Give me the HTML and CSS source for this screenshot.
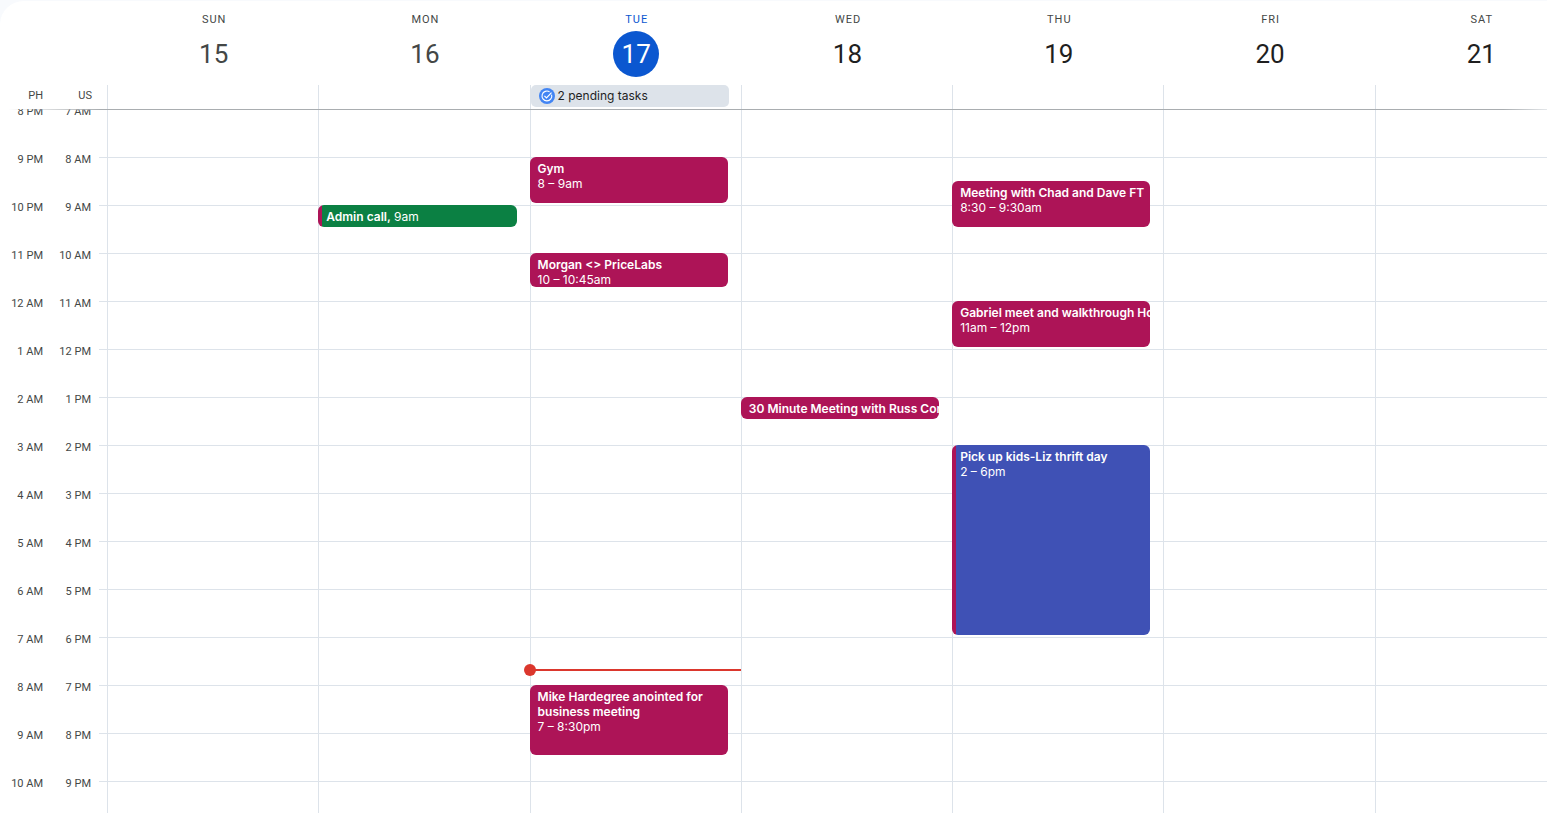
FILE: index.html
```html
<!DOCTYPE html>
<html lang="en">
<head>
<meta charset="utf-8">
<title>Calendar week</title>
<link rel="stylesheet" href="styles.css">
</head>
<body>
<main class="panel">
  <header class="head">
    <div class="week dates">
      <div></div>
      <div class="date past"><span class="dow">SUN</span><button class="num">15</button></div>
      <div class="date past"><span class="dow">MON</span><button class="num">16</button></div>
      <div class="date today"><span class="dow">TUE</span><button class="num">17</button></div>
      <div class="date"><span class="dow">WED</span><button class="num">18</button></div>
      <div class="date"><span class="dow">THU</span><button class="num">19</button></div>
      <div class="date"><span class="dow">FRI</span><button class="num">20</button></div>
      <div class="date"><span class="dow">SAT</span><button class="num">21</button></div>
    </div>
    <div class="week allday">
      <div class="zones"><span>PH</span><span>US</span></div>
      <div class="slot"></div>
      <div class="slot"></div>
      <div class="slot">
        <button class="tasks">
          <svg class="tasks-icon" viewBox="0 0 16 16" width="16" height="16" aria-hidden="true">
            <circle cx="8" cy="8" r="8" fill="#4285f4"/>
            <path d="M12.6 6.6A4.9 4.9 0 1 1 10.6 3.9" fill="none" stroke="#fff" stroke-width="1.1"/>
            <path d="M5.4 7.8l2.1 2.1 5-5.2" fill="none" stroke="#fff" stroke-width="1.2"/>
          </svg>
          <span>2 pending tasks</span>
        </button>
      </div>
      <div class="slot"></div>
      <div class="slot"></div>
      <div class="slot"></div>
      <div class="slot"></div>
    </div>
  </header>
  <div class="scroll">
    <div class="week hours">
      <div class="gutter">
        <div class="times">
          <span>8 PM</span><span>7 AM</span>
          <span>9 PM</span><span>8 AM</span>
          <span>10 PM</span><span>9 AM</span>
          <span>11 PM</span><span>10 AM</span>
          <span>12 AM</span><span>11 AM</span>
          <span>1 AM</span><span>12 PM</span>
          <span>2 AM</span><span>1 PM</span>
          <span>3 AM</span><span>2 PM</span>
          <span>4 AM</span><span>3 PM</span>
          <span>5 AM</span><span>4 PM</span>
          <span>6 AM</span><span>5 PM</span>
          <span>7 AM</span><span>6 PM</span>
          <span>8 AM</span><span>7 PM</span>
          <span>9 AM</span><span>8 PM</span>
          <span>10 AM</span><span>9 PM</span>
        </div>
        <div class="ticks"></div>
      </div>
      <section class="day"></section>
      <section class="day">
        <button class="event green" style="grid-row: 9 / span 2"><span class="line"><b>Admin call,</b> 9am</span></button>
      </section>
      <section class="day">
        <button class="event" style="grid-row: 5 / span 4"><b class="line">Gym</b><span>8 – 9am</span></button>
        <button class="event" style="grid-row: 13 / span 3"><b class="line">Morgan &lt;&gt; PriceLabs</b><span>10 – 10:45am</span></button>
        <button class="event" style="grid-row: 49 / span 6"><b>Mike Hardegree anointed for business meeting</b><span>7 – 8:30pm</span></button>
        <div class="now"></div>
      </section>
      <section class="day">
        <button class="event" style="grid-row: 25 / span 2"><b class="line">30 Minute Meeting with Russ Corn</b></button>
      </section>
      <section class="day">
        <button class="event" style="grid-row: 7 / span 4"><b class="line">Meeting with Chad and Dave FT</b><span>8:30 – 9:30am</span></button>
        <button class="event" style="grid-row: 17 / span 4"><b class="line">Gabriel meet and walkthrough Ho</b><span>11am – 12pm</span></button>
        <button class="event blue" style="grid-row: 29 / span 16"><b class="line">Pick up kids-Liz thrift day</b><span>2 – 6pm</span></button>
      </section>
      <section class="day"></section>
      <section class="day"></section>
    </div>
  </div>
</main>
</body>
</html>
```
FILE: styles.css
```css
* { box-sizing: border-box; }

body {
  margin: 0;
  background: #f8fafd;
  color: #444746;
  font-family: Roboto, "Liberation Sans", sans-serif;
  font-size: 11px;
}

button {
  margin: 0;
  padding: 0;
  border: 0;
  background: none;
  color: inherit;
  font: inherit;
  cursor: pointer;
}

.panel {
  display: flex;
  flex-direction: column;
  height: 100vh;
  padding-top: 1px;
  overflow: hidden;
  background: #fff;
  border-top: 1px solid #f8fafd;
  border-top-left-radius: 24px;
}

/* The last day runs past the right edge, under the scroll bar. */
.week {
  display: grid;
  grid-template-columns: 107px repeat(7, minmax(0, 1fr));
  margin-right: -39px;
}

.head {
  position: relative;
  z-index: 1;
}

.head::after {
  content: "";
  position: absolute;
  top: 100%;
  left: 0;
  width: 100%;
  height: 1px;
  background: linear-gradient(to right, transparent 8px, #a9adb0 100px, #a9adb0 calc(100% - 44px), #e4e7ea);
}

.dates { padding: 10px 0 8px; }

.date {
  display: flex;
  flex-direction: column;
  align-items: center;
  gap: 3px;
  padding-left: 2px;
}

.dow {
  padding-left: 1px;
  line-height: 16px;
  letter-spacing: 1px;
}

.num {
  width: 46px;
  height: 46px;
  border-radius: 50%;
  color: #1f1f1f;
  font-size: 26px;
}

.past .num { color: #444746; }
.today .dow { color: #0b57d0; }
.today .num { background: #0b57d0; color: #fff; }

.allday { height: 24px; }

.zones {
  display: grid;
  grid-template-columns: 43px 49px;
  line-height: 21px;
  text-align: right;
}

.slot { border-left: 1px solid #dde3ea; }

.tasks {
  display: flex;
  align-items: center;
  gap: 3px;
  width: calc(100% - 12px);
  height: 22px;
  padding-left: 8px;
  border-radius: 5px;
  background: #dde3ea;
  color: #1f1f1f;
  font-family: Inter, sans-serif;
  font-size: 12px;
  line-height: 20px;
}

.tasks span { padding-bottom: 1px; }

.scroll {
  flex: 1;
  min-height: 0;
  overflow: hidden;
}

.gutter {
  display: grid;
  grid-template-columns: 99px 8px;
}

.times {
  display: grid;
  grid-template-columns: 43px 48px;
  grid-auto-rows: 48px;
  margin-top: -21px;
  line-height: 48px;
  text-align: right;
}

.ticks,
.day {
  background: repeating-linear-gradient(#dde3ea 0 1px, transparent 1px 48px);
}

/* One row is a quarter of an hour. */
.day {
  position: relative;
  display: grid;
  grid-template-rows: repeat(60, 12px);
  box-shadow: inset 1px 0 #dde3ea;
}

.event {
  display: flex;
  flex-direction: column;
  justify-content: flex-start;
  min-width: 0;
  min-height: 0;
  margin: 0 13px 2px 0;
  padding: 4px 0 0 8px;
  overflow: hidden;
  border-radius: 6px;
  background: #ad1457;
  color: #fff;
  font-family: Inter, sans-serif;
  font-size: 12px;
  line-height: 15px;
  text-align: left;
}

.event b { font-weight: 600; }
.line { white-space: nowrap; }
.green { background: linear-gradient(to right, #ad1457 4px, #0b8043 4px); }
.blue { background: linear-gradient(to right, #ad1457 4px, #3f51b5 4px); }

.now {
  position: absolute;
  top: 560px;
  left: 0;
  width: 100%;
  height: 2px;
  background: #db372d;
}

.now::before {
  content: "";
  position: absolute;
  top: -5px;
  left: -6px;
  width: 12px;
  height: 12px;
  border-radius: 50%;
  background: #db372d;
}
```
